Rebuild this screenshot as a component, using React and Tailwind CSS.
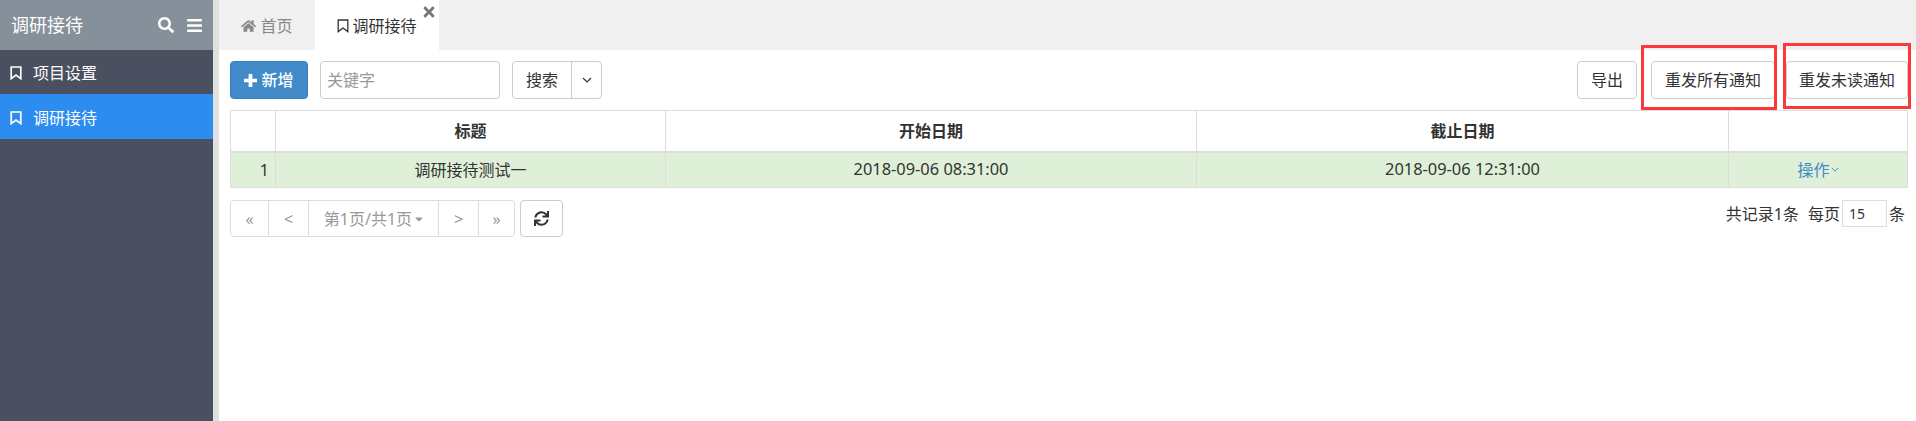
import React from "react";
import { FaSearch, FaBars, FaHome, FaTimes, FaSync, FaCaretDown } from "react-icons/fa";

const font = { fontFamily: '"Noto Sans", "Noto Sans CJK SC", sans-serif' };

// outline bookmark, the package one is too thin at this size
const Bookmark = ({ className, width = 1.7 }) => (
  <svg viewBox="0 0 12 14" className={className} fill="none" stroke="currentColor" strokeWidth={width}>
    <path d="M1.2 1h9.6v11.6L6 9 1.2 12.6z" />
  </svg>
);

const Chevron = ({ className }) => (
  <svg viewBox="0 0 10 6" className={className} fill="none" stroke="currentColor" strokeWidth="1.2">
    <path d="M1 1l4 4 4-4" />
  </svg>
);

const Plus = ({ className }) => (
  <svg viewBox="0 0 14 14" className={className} fill="currentColor">
    <path d="M5 0h4v5h5v4H9v5H5V9H0V5h5z" />
  </svg>
);

const App = () => {
  return (
    <div style={font} className="relative flex h-[421px] w-[1916px] overflow-hidden bg-white text-[16px] text-[#333]">
      {/* Sidebar */}
      <div className="flex w-[213px] shrink-0 flex-col bg-[#4a5060] text-white">
        <div className="flex h-[50px] items-center justify-between bg-[#86909a] pl-[11px] pr-[11px]">
          <span className="text-[18px]">调研接待</span>
          <div className="flex items-center gap-[13px]">
            <FaSearch className="h-[16px] w-[16px]" />
            <FaBars className="h-[17px] w-[15px]" />
          </div>
        </div>
        <div className="flex h-[44px] items-center gap-[11px] pl-[10px] pt-[2px]">
          <Bookmark className="h-[14px] w-[12px]" />
          <span>项目设置</span>
        </div>
        <div className="flex h-[45px] items-center gap-[11px] bg-[#2d8cf0] pl-[10px] pt-[2px]">
          <Bookmark className="h-[14px] w-[12px]" />
          <span>调研接待</span>
        </div>
      </div>
      <div className="w-[6px] shrink-0 bg-[#e0e0e0]" />

      {/* Main */}
      <div className="flex min-w-0 flex-1 flex-col">
        <div className="flex h-[50px] bg-[#f0f0f0]">
          <div className="flex w-[96px] items-center justify-center gap-[4px] pt-[1px] text-[#888]">
            <FaHome className="h-[14px] w-[15px]" />
            <span>首页</span>
          </div>
          <div className="relative flex w-[124px] items-center justify-center gap-[3px] bg-white pt-[1px]">
            <Bookmark className="h-[14px] w-[12px]" width={1.3} />
            <span>调研接待</span>
            <FaTimes className="absolute right-[4px] top-[4px] h-[16px] w-[12px] text-[#777]" />
          </div>
        </div>

        <div className="flex flex-col pl-[11px] pr-[8px] pt-[11px]">
          {/* Toolbar */}
          <div className="flex h-[38px] items-stretch justify-between">
            <div className="flex items-stretch">
              <button className="flex w-[78px] items-center justify-center gap-[4px] rounded-[4px] border border-[#357ebd] bg-[#428bca] font-medium text-white">
                <Plus className="h-[13px] w-[13px]" />
                <span>新增</span>
              </button>
              <input
                placeholder="关键字"
                className="ml-[12px] w-[180px] rounded-[4px] border border-[#ccc] px-[6px] text-[16px] outline-none placeholder:text-[#999]"
              />
              <div className="ml-[12px] flex overflow-hidden rounded-[4px] border border-[#ccc]">
                <div className="flex w-[58px] items-center justify-center">搜索</div>
                <div className="flex w-[30px] items-center justify-center border-l border-[#ccc]">
                  <Chevron className="h-[6px] w-[10px]" />
                </div>
              </div>
            </div>
            <div className="flex items-stretch">
              <button className="flex w-[60px] items-center justify-center rounded-[4px] border border-[#ccc]">导出</button>
              <button className="ml-[14px] flex w-[124px] items-center justify-center rounded-[4px] border border-[#ccc]">重发所有通知</button>
              <button className="ml-[11px] flex w-[122px] items-center justify-center rounded-[4px] border border-[#ccc]">重发未读通知</button>
            </div>
          </div>

          {/* Table */}
          <table className="mt-[11px] w-[1677px] table-fixed border-collapse">
            <colgroup>
              <col className="w-[45px]" />
              <col className="w-[390px]" />
              <col className="w-[531px]" />
              <col className="w-[532px]" />
              <col className="w-[179px]" />
            </colgroup>
            <thead>
              <tr className="h-[41px] text-center font-bold">
                <th className="border border-b-[2px] border-[#ddd]"></th>
                <th className="border border-b-[2px] border-[#ddd]">标题</th>
                <th className="border border-b-[2px] border-[#ddd]">开始日期</th>
                <th className="border border-b-[2px] border-[#ddd]">截止日期</th>
                <th className="border border-b-[2px] border-[#ddd]"></th>
              </tr>
            </thead>
            <tbody>
              <tr className="h-[36px] bg-[#dff0d8] text-center">
                <td className="border border-[#ddd] pr-[6px] text-right">1</td>
                <td className="border border-[#ddd]">调研接待测试一</td>
                <td className="border border-[#ddd] text-[16.4px]">2018-09-06 08:31:00</td>
                <td className="border border-[#ddd] text-[16.4px]">2018-09-06 12:31:00</td>
                <td className="border border-[#ddd] text-[#428bca]">
                  <span className="inline-flex items-center gap-[1px]">
                    操作
                    <Chevron className="h-[5px] w-[8px]" />
                  </span>
                </td>
              </tr>
            </tbody>
          </table>

          {/* Pager */}
          <div className="mt-[12px] flex items-start justify-between">
            <div className="flex">
              <div className="flex h-[37px] overflow-hidden rounded-[4px] border border-[#ddd] text-[#999]">
                <div className="flex w-[37px] items-center justify-center">«</div>
                <div className="flex w-[40px] items-center justify-center border-l border-[#ddd]">&lt;</div>
                <div className="flex w-[130px] items-center justify-center gap-[3px] border-l border-[#ddd]">
                  第1页/共1页
                  <FaCaretDown className="h-[12px] w-[8px]" />
                </div>
                <div className="flex w-[40px] items-center justify-center border-l border-[#ddd]">&gt;</div>
                <div className="flex w-[36px] items-center justify-center border-l border-[#ddd]">»</div>
              </div>
              <div className="ml-[5px] flex h-[37px] w-[43px] items-center justify-center rounded-[4px] border border-[#ccc]">
                <FaSync className="h-[15px] w-[15px] text-[#333]" />
              </div>
            </div>
            <div className="flex items-center pr-[3px]">
              <span>共记录1条</span>
              <span className="ml-[9px]">每页</span>
              <input
                defaultValue="15"
                className="ml-[2px] h-[27px] w-[45px] border border-[#ddd] px-[6px] text-[14px] outline-none"
              />
              <span className="ml-[2px]">条</span>
            </div>
          </div>
        </div>
      </div>

      {/* Red annotation boxes */}
      <div className="absolute left-[1641px] top-[45px] h-[65px] w-[136px] border-[3px] border-[#f93a3a]" />
      <div className="absolute left-[1783px] top-[43px] h-[66px] w-[128px] border-[3px] border-[#f93a3a]" />
    </div>
  );
};

export default App;
